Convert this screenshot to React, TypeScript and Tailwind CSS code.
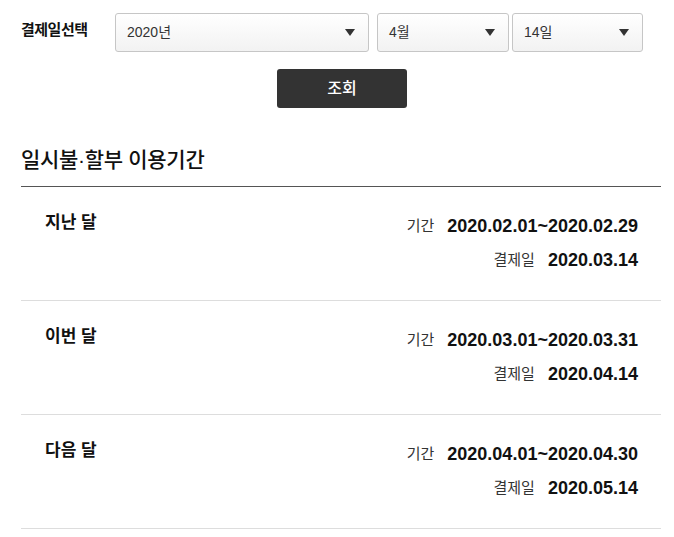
import React from "react";

const font = { fontFamily: '"Liberation Sans", "Noto Sans CJK KR", sans-serif' };

function Select({ value, width }: { value: string; width: string }) {
  return (
    <div
      className={`${width} h-[39px] flex items-center justify-between pl-[11px] pr-[13px] border border-[#c6c6c6] rounded-[3px] bg-gradient-to-b from-white to-[#f2f2f2] text-[14px] text-[#333]`}
    >
      <span>{value}</span>
      <svg width="10" height="7" viewBox="0 0 10 7">
        <path d="M0 0 L10 0 L5 7 Z" fill="#333" />
      </svg>
    </div>
  );
}

const rows = [
  { label: "지난 달", period: "2020.02.01~2020.02.29", pay: "2020.03.14" },
  { label: "이번 달", period: "2020.03.01~2020.03.31", pay: "2020.04.14" },
  { label: "다음 달", period: "2020.04.01~2020.04.30", pay: "2020.05.14" },
];

export default function App() {
  return (
    <div className="w-[674px] h-[537px] bg-white text-[#111] px-[21px] pr-[13px] overflow-hidden" style={font}>
      <div className="flex items-start pt-[13px]">
        <div className="w-[94px] pt-[6px] text-[15px] font-bold tracking-[-0.5px]">결제일선택</div>
        <Select value="2020년" width="w-[254px]" />
        <div className="w-[8px]" />
        <Select value="4월" width="w-[132px]" />
        <div className="w-[3px]" />
        <Select value="14일" width="w-[131px]" />
      </div>
      <div className="flex justify-center pt-[17px] pl-[2px]">
        <div className="w-[130px] h-[39px] bg-[#333] rounded-[3px] text-white text-[16px] font-medium flex items-center justify-center">
          조회
        </div>
      </div>
      <div className="w-[640px]">
        <div className="mt-[37px] text-[21px] font-medium leading-[30px] tracking-[-0.3px] pb-[11px] border-b border-[#555]">
          일시불·할부 이용기간
        </div>
        {rows.map((r) => (
          <div key={r.label} className="h-[114px] border-b border-[#ddd] flex justify-between pl-[24px] pr-[23px] pt-[24px]">
            <div className="text-[17px] font-bold leading-[24px]">{r.label}</div>
            <div className="flex flex-col items-end">
              <div className="flex items-center h-[30px]">
                <span className="text-[15px] text-[#333] mr-[13px]">기간</span>
                <span className="text-[18px] font-bold">{r.period}</span>
              </div>
              <div className="flex items-center h-[30px] mt-[4px]">
                <span className="text-[15px] text-[#333] mr-[13px]">결제일</span>
                <span className="text-[18px] font-bold">{r.pay}</span>
              </div>
            </div>
          </div>
        ))}
      </div>
    </div>
  );
}
